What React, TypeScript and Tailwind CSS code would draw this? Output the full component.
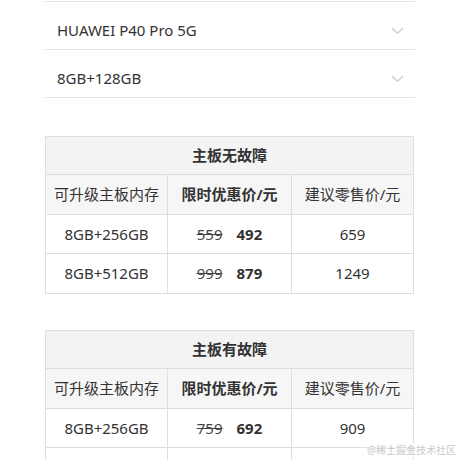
import React from "react";

const Chevron = () => (
  <svg width="13" height="8" viewBox="0 0 13 8" fill="none">
    <path d="M1 1l5.5 5.5L12 1" stroke="#c8c8c8" strokeWidth="1.2" />
  </svg>
);

type Row = { mem: string; old: string; now: string; retail: string };

const PriceTable = ({ title, rows }: { title: string; rows: Row[] }) => (
  <div className="border border-[#dedede] text-[15px] text-[#333]">
    <div className="h-[38px] flex items-center justify-center bg-[#f3f3f3] font-bold border-b border-[#dedede]">
      {title}
    </div>
    <div className="grid grid-cols-[122px_124px_1fr] bg-[#f6f6f6] h-[40px] border-b border-[#dedede]">
      <div className="flex items-center justify-center border-r border-[#dedede]">可升级主板内存</div>
      <div className="flex items-center justify-center border-r border-[#dedede] font-bold">限时优惠价/元</div>
      <div className="flex items-center justify-center">建议零售价/元</div>
    </div>
    {rows.map((r, i) => (
      <div
        key={i}
        className="grid grid-cols-[122px_124px_1fr] h-[39px] border-b border-[#dedede] last:border-b-0"
      >
        <div className="flex items-center justify-center border-r border-[#dedede]">{r.mem}</div>
        <div className="flex items-center justify-center gap-[14px] border-r border-[#dedede]">
          <span className="line-through text-[#444]">{r.old}</span>
          <span className="font-bold">{r.now}</span>
        </div>
        <div className="flex items-center justify-center">{r.retail}</div>
      </div>
    ))}
  </div>
);

export default function App() {
  return (
    <div
      className="w-[460px] h-[460px] overflow-hidden bg-white relative"
      style={{ fontFamily: '"Noto Sans", "Noto Sans CJK SC", sans-serif' }}
    >
      <div className="mx-[45px] w-[370px]">
        <div className="h-[2px] border-b border-[#e4e4e4]" />
        <div className="h-[48px] flex items-center justify-between pt-[10px] pl-[12px] pr-[11px] border-b border-[#e4e4e4] text-[15px] text-[#333]">
          <span>HUAWEI P40 Pro 5G</span>
          <Chevron />
        </div>
        <div className="h-[48px] flex items-center justify-between pt-[10px] pl-[12px] pr-[11px] border-b border-[#e4e4e4] text-[15px] text-[#333]">
          <span>8GB+128GB</span>
          <Chevron />
        </div>
      </div>
      <div className="ml-[45px] w-[369px] mt-[38px]">
        <PriceTable
          title="主板无故障"
          rows={[
            { mem: "8GB+256GB", old: "559", now: "492", retail: "659" },
            { mem: "8GB+512GB", old: "999", now: "879", retail: "1249" },
          ]}
        />
      </div>
      <div className="ml-[45px] w-[369px] mt-[36px]">
        <PriceTable
          title="主板有故障"
          rows={[
            { mem: "8GB+256GB", old: "759", now: "692", retail: "909" },
            { mem: "", old: "", now: "", retail: "" },
          ]}
        />
      </div>
      <div className="absolute right-[4px] bottom-[2px] text-[10px] text-[#c9c9c9] bg-white/70">
        @稀土掘金技术社区
      </div>
    </div>
  );
}
